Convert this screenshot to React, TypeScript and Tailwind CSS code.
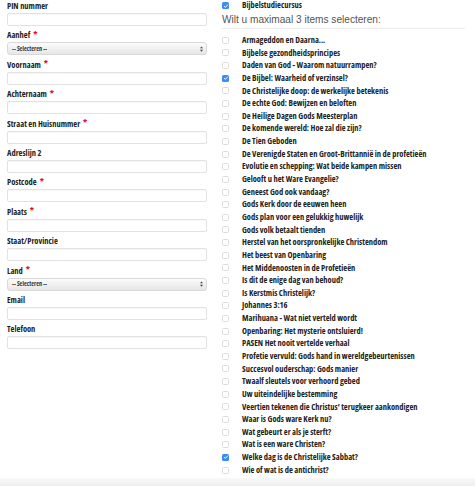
import React from 'react';

const fields: { label: string; required?: boolean; type: 'input' | 'select' }[] = [
  { label: 'PIN nummer', type: 'input' },
  { label: 'Aanhef', required: true, type: 'select' },
  { label: 'Voornaam', required: true, type: 'input' },
  { label: 'Achternaam', required: true, type: 'input' },
  { label: 'Straat en Huisnummer', required: true, type: 'input' },
  { label: 'Adreslijn 2', type: 'input' },
  { label: 'Postcode', required: true, type: 'input' },
  { label: 'Plaats', required: true, type: 'input' },
  { label: 'Staat/Provincie', type: 'input' },
  { label: 'Land', required: true, type: 'select' },
  { label: 'Email', type: 'input' },
  { label: 'Telefoon', type: 'input' },
];

const courses: { title: string; checked?: boolean }[] = [
  { title: 'Armageddon en Daarna...' },
  { title: 'Bijbelse gezondheidsprincipes' },
  { title: 'Daden van God - Waarom natuurrampen?' },
  { title: 'De Bijbel: Waarheid of verzinsel?', checked: true },
  { title: 'De Christelijke doop: de werkelijke betekenis' },
  { title: 'De echte God: Bewijzen en beloften' },
  { title: 'De Heilige Dagen Gods Meesterplan' },
  { title: 'De komende wereld: Hoe zal die zijn?' },
  { title: 'De Tien Geboden' },
  { title: 'De Verenigde Staten en Groot-Brittannië in de profetieën' },
  { title: 'Evolutie en schepping: Wat beide kampen missen' },
  { title: 'Gelooft u het Ware Evangelie?' },
  { title: 'Geneest God ook vandaag?' },
  { title: 'Gods Kerk door de eeuwen heen' },
  { title: 'Gods plan voor een gelukkig huwelijk' },
  { title: 'Gods volk betaalt tienden' },
  { title: 'Herstel van het oorspronkelijke Christendom' },
  { title: 'Het beest van Openbaring' },
  { title: 'Het Middenoosten in de Profetieën' },
  { title: 'Is dit de enige dag van behoud?' },
  { title: 'Is Kerstmis Christelijk?' },
  { title: 'Johannes 3:16' },
  { title: 'Marihuana - Wat niet verteld wordt' },
  { title: 'Openbaring: Het mysterie ontsluierd!' },
  { title: 'PASEN Het nooit vertelde verhaal' },
  { title: 'Profetie vervuld: Gods hand in wereldgebeurtenissen' },
  { title: 'Succesvol ouderschap: Gods manier' },
  { title: 'Twaalf sleutels voor verhoord gebed' },
  { title: 'Uw uiteindelijke bestemming' },
  { title: 'Veertien tekenen die Christus\u2019 terugkeer aankondigen' },
  { title: 'Waar is Gods ware Kerk nu?' },
  { title: 'Wat gebeurt er als je sterft?' },
  { title: 'Wat is een ware Christen?' },
  { title: 'Welke dag is de Christelijke Sabbat?', checked: true },
  { title: 'Wie of wat is de antichrist?' },
];

const Check = ({ checked }: { checked?: boolean }) =>
  checked ? (
    <span className="flex h-[7px] w-[7px] shrink-0 items-center justify-center rounded-[1.5px] bg-[#3b8cf5]">
      <svg viewBox="0 0 8 8" className="h-[6px] w-[6px]">
        <path d="M1.5 4.2 L3.2 5.8 L6.5 2.2" fill="none" stroke="#fff" strokeWidth="1.3" />
      </svg>
    </span>
  ) : (
    <span className="h-[7px] w-[7px] shrink-0 rounded-[1.5px] border border-[#dcdcdc] bg-white" />
  );

const App = () => {
  const label = "font-['Open_Sans',sans-serif] font-bold text-[8.45px] text-[#222] [font-stretch:87.5%]";
  return (
    <div className="flex h-[486px] w-[475px] flex-col overflow-hidden bg-white">
      <div className="flex flex-1">
        <div className="ml-[7px] w-[200px]">
          {fields.map((f) => (
            <div key={f.label} className="h-[29.4px]">
              <div className={`flex h-[12px] items-center leading-[12px] ${label}`}>
                <span>{f.label}</span>
                {f.required && <span className="relative -top-[1px] ml-[3px] text-[9.5px] leading-[9px] text-[#e3141b]">*</span>}
              </div>
              {f.type === 'input' ? (
                <div className="mt-px h-[13px] rounded-[2px] border border-[#e2e2e2] bg-white shadow-[inset_0_1px_1px_rgba(0,0,0,0.03)]" />
              ) : (
                <div className="mt-px flex h-[13px] items-center justify-between rounded-[3px] border border-[#d9d9d9] bg-gradient-to-b from-[#fbfbfb] to-[#e6e6e6] pl-[4px] pr-[3px]">
                  <span className="font-['Open_Sans',sans-serif] text-[6.2px] font-bold text-[#333] [font-stretch:87.5%]">-- Selecteren --</span>
                  <svg viewBox="0 0 4 8" className="h-[6px] w-[3px]">
                    <path d="M0 3 L2 0.5 L4 3 Z M0 5 L2 7.5 L4 5 Z" fill="#444" />
                  </svg>
                </div>
              )}
            </div>
          ))}
        </div>
        <div className="ml-[15px] w-[243px]">
          <div className="flex h-[11px] items-center">
            <Check checked />
            <span className={`ml-[13px] ${label}`}>Bijbelstudiecursus</span>
          </div>
          <div className="mt-[3px] flex h-[12px] items-center font-['Liberation_Sans',sans-serif] text-[10.1px] text-[#555]">
            Wilt u maximaal 3 items selecteren:
          </div>
          <div className="mt-[2px] border-b border-[#ececec]" />
          <div className="mt-[5px]">
            {courses.map((c) => (
              <div key={c.title} className="flex h-[12.65px] items-center">
                <Check checked={c.checked} />
                <span className={`ml-[13px] whitespace-nowrap ${label}`}>{c.title}</span>
              </div>
            ))}
          </div>
        </div>
      </div>
      <div className="h-[8px] bg-gradient-to-b from-[#f8f8f8] to-[#eeeeee]" />
    </div>
  );
};

export default App;
